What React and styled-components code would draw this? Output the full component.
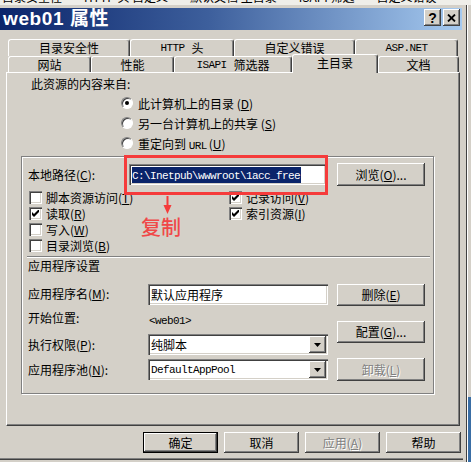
import React from "react";
import styled, { createGlobalStyle } from "styled-components";

const GlobalStyle = createGlobalStyle`
  html, body {
    margin: 0;
    padding: 0;
    background: #d4d0c8;
  }
  body {
    width: 471px;
    height: 462px;
    overflow: hidden;
    font-family: "Noto Sans CJK SC", "Liberation Sans", sans-serif;
    font-size: 12px;
    color: #000;
  }
`;

const Screen = styled.div`
  width: 471px;
  height: 462px;
  display: flex;
  flex-direction: column;
  overflow: hidden;
`;

const BehindStrip = styled.div`
  height: 5px;
  background: #efeee9;
  overflow: hidden;
  display: flex;
  gap: 22px;
  padding-left: 2px;
  span {
    display: block;
    line-height: 12px;
    margin-top: -9px;
    white-space: nowrap;
  }
`;

const Row = styled.div`
  display: flex;
  flex: 1;
`;

const Dialog = styled.div`
  width: 463px;
  height: 455px;
  box-sizing: border-box;
  padding-top: 3px;
  display: flex;
  flex-direction: column;
  background: #d4d0c8;
  border-bottom: 1px solid #404040;
  box-shadow: inset 0 -1px #808080;
`;

const Side = styled.div`
  width: 8px;
  display: flex;
`;

const SideGap = styled.div`
  width: 3px;
  background: #d4d0c8;
`;

const SideLine = styled.div`
  width: 1px;
  background: #404040;
`;

const SideWindow = styled.div`
  flex: 1;
  display: flex;
  flex-direction: column;
  border-left: 1px solid #fff;
  div:first-child {
    height: 392px;
    background: #d4d0c8;
  }
  div:last-child {
    flex: 1;
    background: #3a6ea5;
  }
`;

const TitleBar = styled.div`
  height: 22px;
  margin-right: 1px;
  display: flex;
  justify-content: space-between;
  align-items: flex-start;
  padding: 0 2px 0 3px;
  background: linear-gradient(90deg, #0a246a 0%, #3d5f9c 45%, #a6caf0 100%);
`;

const TitleText = styled.div`
  color: #fff;
  font-family: "Liberation Sans", "Noto Sans CJK SC", sans-serif;
  font-weight: bold;
  font-size: 19px;
  line-height: 22px;
  letter-spacing: 0.6px;
`;

const CaptionButtons = styled.div`
  display: flex;
  gap: 2px;
  padding-top: 1px;
`;

const CaptionButton = styled.div`
  width: 17px;
  height: 17px;
  box-sizing: border-box;
  display: flex;
  align-items: center;
  justify-content: center;
  background: #d4d0c8;
  box-shadow: inset -1px -1px #404040, inset 1px 1px #fff, inset -2px -2px #808080;
  font-family: "Liberation Sans", sans-serif;
  font-weight: bold;
  font-size: 14px;
  line-height: 14px;
`;

const TabStrip = styled.div`
  margin-top: 9px;
  padding-left: 8px;
  display: flex;
  flex-direction: column;
`;

const TabRow = styled.div`
  display: flex;
  align-items: flex-start;
  height: ${(p) => p.$h}px;
`;

const Tab = styled.div`
  position: relative;
  z-index: ${(p) => (p.$selected ? 2 : 0)};
  width: ${(p) => p.$w}px;
  height: ${(p) => (p.$selected ? 19 : 17)}px;
  margin-top: ${(p) => (p.$selected ? -2 : 0)}px;
  box-sizing: border-box;
  display: flex;
  align-items: center;
  justify-content: center;
  padding-bottom: ${(p) => (p.$selected ? 2 : 0)}px;
  background: #d4d0c8;
  border-top: 1px solid #fff;
  border-left: 1px solid #fff;
  border-right: 1px solid #404040;
  border-radius: 3px 3px 0 0;
  box-shadow: inset -1px 0 #808080;
  line-height: 14px;
`;

const Mono = styled.span`
  font-family: "Liberation Mono", monospace;
  font-size: 11px;
  letter-spacing: -0.6px;
  margin-right: ${(p) => p.$gap || 0}px;
`;

const Panel = styled.div`
  position: relative;
  margin-left: 6px;
  width: 454px;
  height: 354px;
  box-sizing: border-box;
  padding-top: 3px;
  border-top: 1px solid #fff;
  border-left: 1px solid #fff;
  border-right: 1px solid #404040;
  border-bottom: 1px solid #404040;
  box-shadow: inset -1px -1px #808080;
`;

const SourceLabel = styled.div`
  margin-left: 24px;
  height: 16px;
  line-height: 16px;
`;

const RadioList = styled.div`
  margin: 1px 0 0 114px;
  display: flex;
  flex-direction: column;
`;

const RadioRow = styled.div`
  height: 20px;
  display: flex;
  align-items: center;
  gap: 5px;
`;

const RadioCircle = styled.div`
  width: 12px;
  height: 12px;
  box-sizing: border-box;
  border-radius: 50%;
  border: 1px solid;
  border-color: #808080 #fff #fff #808080;
  background: #fff;
  box-shadow: inset 1px 1px #404040;
  display: flex;
  align-items: center;
  justify-content: center;
  &::after {
    content: "";
    width: 4px;
    height: 4px;
    border-radius: 50%;
    background: ${(p) => (p.$on ? "#000" : "transparent")};
  }
`;

const Frame = styled.div`
  position: relative;
  margin: 3px 0 0 14px;
  width: 413px;
  height: 238px;
  box-sizing: border-box;
  padding: 0 0 0 6px;
  border: 1px solid #808080;
  box-shadow: inset 1px 1px #fff, 1px 1px #fff;
`;

const PathRow = styled.div`
  margin-top: 6px;
  height: 23px;
  display: flex;
  align-items: center;
`;

const FieldLabel = styled.div`
  width: ${(p) => p.$w}px;
  flex-shrink: 0;
  line-height: 16px;
`;

const Field = styled.div`
  position: relative;
  width: ${(p) => p.$w}px;
  height: 21px;
  box-sizing: border-box;
  padding: 0 2px 0 3px;
  display: flex;
  align-items: center;
  background: #fff;
  box-shadow: inset 1px 1px #808080, inset 2px 2px #404040, inset -1px -1px #fff, inset -2px -2px #d4d0c8;
  white-space: nowrap;
  overflow: hidden;
`;

const Selected = styled.span`
  background: #0a246a;
  color: #fff;
  line-height: 13px;
  padding-right: 1px;
`;

const DropButton = styled.div`
  position: absolute;
  right: 2px;
  top: 2px;
  width: 17px;
  height: 17px;
  box-sizing: border-box;
  display: flex;
  align-items: center;
  justify-content: center;
  background: #d4d0c8;
  box-shadow: inset -1px -1px #404040, inset 1px 1px #fff, inset -2px -2px #808080;
`;

const Button = styled.div`
  width: ${(p) => p.$w || 88}px;
  height: ${(p) => p.$h || 22}px;
  margin-left: ${(p) => p.$ml || 0}px;
  flex-shrink: 0;
  box-sizing: border-box;
  display: flex;
  align-items: center;
  justify-content: center;
  background: #d4d0c8;
  border: ${(p) => (p.$default ? "1px solid #000" : "none")};
  box-shadow: inset -1px -1px #404040, inset 1px 1px #fff, inset -2px -2px #808080;
  color: ${(p) => (p.$disabled ? "#808080" : "#000")};
  text-shadow: ${(p) => (p.$disabled ? "1px 1px #fff" : "none")};
  line-height: 14px;
`;

const CheckGrid = styled.div`
  margin-top: 3px;
  display: grid;
  grid-template-columns: 200px 1fr;
  grid-auto-rows: 16px;
`;

const CheckItem = styled.div`
  grid-column: ${(p) => p.$col};
  grid-row: ${(p) => p.$row};
  display: flex;
  align-items: center;
  gap: 4px;
  padding-left: 1px;
`;

const CheckBox = styled.div`
  width: 13px;
  height: 13px;
  box-sizing: border-box;
  display: flex;
  align-items: center;
  justify-content: center;
  background: #fff;
  box-shadow: inset 1px 1px #808080, inset 2px 2px #404040, inset -1px -1px #fff, inset -2px -2px #d4d0c8;
`;

const Separator = styled.div`
  margin: 3px 0 0 -1px;
  width: 403px;
  height: 1px;
  background: #808080;
  border-bottom: 1px solid #fff;
`;

const SectionTitle = styled.div`
  height: 16px;
  line-height: 16px;
`;

const AppArea = styled.div`
  margin-top: 9px;
  display: flex;
`;

const AppFields = styled.div`
  width: 309px;
  display: flex;
  flex-direction: column;
`;

const AppRow = styled.div`
  margin-top: ${(p) => p.$mt || 0}px;
  height: ${(p) => p.$h}px;
  display: flex;
  align-items: center;
`;

const Plain = styled.div`
  margin-left: 1px;
`;

const ButtonColumn = styled.div`
  margin-top: 1px;
  display: flex;
  flex-direction: column;
  gap: 15px;
`;

const RedBox = styled.div`
  position: absolute;
  left: 102px;
  top: -2px;
  width: 204px;
  height: 40px;
  box-sizing: border-box;
  border: 3px solid #f53b3b;
  pointer-events: none;
`;

const RedArrow = styled.svg`
  position: absolute;
  left: 140px;
  top: 39px;
`;

const CopyNote = styled.div`
  position: absolute;
  left: 119px;
  top: 59px;
  color: #f04848;
  font-size: 20px;
  line-height: 22px;
  font-weight: 500;
`;

const BottomBar = styled.div`
  margin-top: 6px;
  padding-right: 2px;
  display: flex;
  justify-content: flex-end;
  gap: 6px;
`;

const Key = ({ k }) => (
  <span>
    (<u>{k}</u>)
  </span>
);

const Check = () => (
  <svg width="7" height="7" viewBox="0 0 7 7">
    <polygon points="0,2 2,4 6,0 7,0 7,2 2,7 0,5" fill="#000" />
  </svg>
);

const Arrow = () => (
  <svg width="7" height="4" viewBox="0 0 7 4">
    <polygon points="0,0 7,0 3.5,4" fill="#000" />
  </svg>
);

const backTabs = [
  { w: 122, label: "目录安全性" },
  { w: 104, label: <><Mono $gap={7}>HTTP</Mono>头</> },
  { w: 121, label: "自定义错误" },
  { w: 103, label: <Mono>ASP.NET</Mono> },
];

const frontTabs = [
  { w: 83, label: "网站" },
  { w: 83, label: "性能" },
  { w: 118, label: <><Mono $gap={7}>ISAPI</Mono>筛选器</> },
  { w: 86, label: "主目录", selected: true },
  { w: 81, label: "文档" },
];

const checks = [
  { col: 1, row: 1, label: "脚本资源访问", k: "T", on: false },
  { col: 1, row: 2, label: "读取", k: "R", on: true },
  { col: 1, row: 3, label: "写入", k: "W", on: false },
  { col: 1, row: 4, label: "目录浏览", k: "B", on: false },
  { col: 2, row: 1, label: "记录访问", k: "V", on: true },
  { col: 2, row: 2, label: "索引资源", k: "I", on: true },
];

const App = () => {
  return (
    <Screen>
      <GlobalStyle />
      <BehindStrip>
        <span>目录安全性</span>
        <span>HTTP 头 自定义</span>
        <span>默认文档 主目录</span>
        <span>ISAPI 筛选</span>
        <span>自定义错误</span>
      </BehindStrip>
      <Row>
        <Dialog>
          <TitleBar>
            <TitleText>web01 属性</TitleText>
            <CaptionButtons>
              <CaptionButton>?</CaptionButton>
              <CaptionButton>
                <svg width="9" height="8" viewBox="0 0 9 8">
                  <path d="M1 0.5 L8 7.5 M8 0.5 L1 7.5" stroke="#000" strokeWidth="1.8" />
                </svg>
              </CaptionButton>
            </CaptionButtons>
          </TitleBar>

          <TabStrip>
            <TabRow $h={17}>
              {backTabs.map((t, i) => (
                <Tab key={i} $w={t.w}>{t.label}</Tab>
              ))}
            </TabRow>
            <TabRow $h={16}>
              {frontTabs.map((t, i) => (
                <Tab key={i} $w={t.w} $selected={t.selected}>{t.label}</Tab>
              ))}
            </TabRow>
          </TabStrip>

          <Panel>
            <SourceLabel>此资源的内容来自:</SourceLabel>
            <RadioList>
              <RadioRow>
                <RadioCircle $on />
                <span>此计算机上的目录 <Key k="D" /></span>
              </RadioRow>
              <RadioRow>
                <RadioCircle />
                <span>另一台计算机上的共享 <Key k="S" /></span>
              </RadioRow>
              <RadioRow>
                <RadioCircle />
                <span>重定向到 <Mono $gap={2}>URL</Mono><Key k="U" /></span>
              </RadioRow>
            </RadioList>

            <Frame>
              <PathRow>
                <FieldLabel $w={101}>本地路径<Key k="C" />:</FieldLabel>
                <Field $w={197}>
                  <Selected><Mono>C:\Inetpub\wwwroot\1acc_free</Mono></Selected>
                </Field>
                <Button $ml={11} $h={23}>浏览<Key k="O" />...</Button>
              </PathRow>

              <CheckGrid>
                {checks.map((c) => (
                  <CheckItem key={c.label} $col={c.col} $row={c.row}>
                    <CheckBox>{c.on && <Check />}</CheckBox>
                    <span>{c.label}<Key k={c.k} /></span>
                  </CheckItem>
                ))}
              </CheckGrid>

              <Separator />
              <SectionTitle>应用程序设置</SectionTitle>

              <AppArea>
                <AppFields>
                  <AppRow $h={22}>
                    <FieldLabel $w={120}>应用程序名<Key k="M" />:</FieldLabel>
                    <Field $w={180}>默认应用程序</Field>
                  </AppRow>
                  <AppRow $h={16} $mt={5}>
                    <FieldLabel $w={120}>开始位置:</FieldLabel>
                    <Plain><Mono>&lt;web01&gt;</Mono></Plain>
                  </AppRow>
                  <AppRow $h={21} $mt={8}>
                    <FieldLabel $w={120}>执行权限<Key k="P" />:</FieldLabel>
                    <Field $w={180}>
                      纯脚本
                      <DropButton><Arrow /></DropButton>
                    </Field>
                  </AppRow>
                  <AppRow $h={21} $mt={4}>
                    <FieldLabel $w={120}>应用程序池<Key k="N" />:</FieldLabel>
                    <Field $w={180}>
                      <Mono>DefaultAppPool</Mono>
                      <DropButton><Arrow /></DropButton>
                    </Field>
                  </AppRow>
                </AppFields>
                <ButtonColumn>
                  <Button>删除<Key k="E" /></Button>
                  <Button>配置<Key k="G" />...</Button>
                  <Button $h={23} $disabled>卸载<Key k="L" /></Button>
                </ButtonColumn>
              </AppArea>

              <RedBox />
              <RedArrow width="11" height="18" viewBox="0 0 11 18">
                <path d="M5.5 0 L5.5 12" stroke="#f53b3b" strokeWidth="2" />
                <polygon points="1.5,9 9.5,9 5.5,18" fill="#f53b3b" />
              </RedArrow>
              <CopyNote>复制</CopyNote>
            </Frame>
          </Panel>

          <BottomBar>
            <Button $w={75} $h={21} $default>确定</Button>
            <Button $w={75} $h={21}>取消</Button>
            <Button $w={75} $h={21} $disabled>应用<Key k="A" /></Button>
            <Button $w={75} $h={21}>帮助</Button>
          </BottomBar>
        </Dialog>
        <Side>
          <SideGap />
          <SideLine />
          <SideWindow>
            <div />
            <div />
          </SideWindow>
        </Side>
      </Row>
    </Screen>
  );
};

export default App;
